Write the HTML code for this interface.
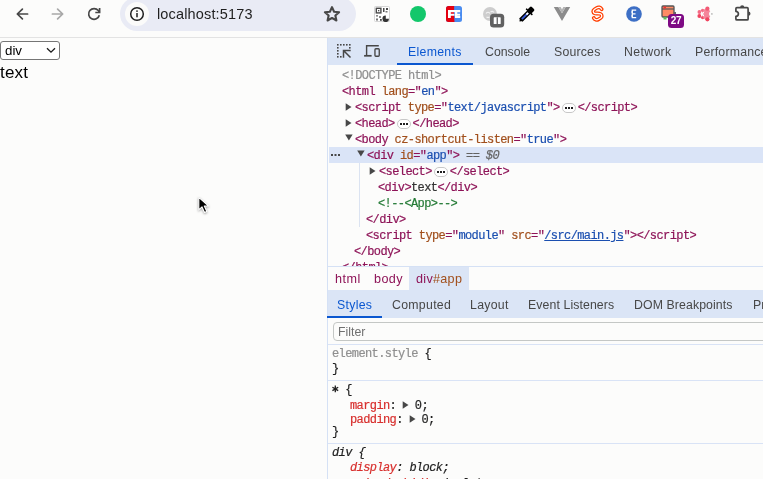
<!DOCTYPE html>
<html><head><meta charset="utf-8">
<style>
*{margin:0;padding:0;box-sizing:border-box}
html,body{width:763px;height:479px;overflow:hidden;background:#fcfcfb;font-family:"Liberation Sans",sans-serif;position:relative}
.a{position:absolute;white-space:pre}
#tb{position:absolute;left:0;top:0;width:763px;height:37px;background:#fcfcfb}
#tbline{position:absolute;left:0;top:37px;width:763px;height:1px;background:#e3e3e3}
#omni{position:absolute;left:120px;top:-3px;width:236px;height:34px;border-radius:17px;background:#e9ebf5}
#omnicirc{position:absolute;left:125px;top:2px;width:24px;height:24px;border-radius:12px;background:#fbfbfa}
#url{position:absolute;left:157px;top:5px;font-size:14.5px;color:#1f1f1f;line-height:18px;letter-spacing:0.15px}
/* devtools */
#dt{position:absolute;left:327px;top:38px;width:436px;height:441px;background:#fcfcfb}
#dtborder{position:absolute;left:327px;top:38px;width:1px;height:441px;background:#d5e1f5}
#tabs{position:absolute;left:328px;top:38px;width:435px;height:27px;background:#dbe5f6}
.tab{position:absolute;top:46px;font-size:12.3px;line-height:13px;color:#474747}
.mono{font-family:"Liberation Mono",monospace;font-size:12px;letter-spacing:-0.6px;line-height:16px;-webkit-text-stroke:0.2px}
.tag{color:#8e1458}
.an{color:#a14f1c}
.av{color:#1b4fb0}
.gr{color:#8f8f8f}
.cm{color:#237a35}
.row{position:absolute;height:16px}
#sel{position:absolute;left:329px;top:147px;width:434px;height:16px;background:#dae4f7}
#guide{position:absolute;left:359px;top:163px;width:1px;height:64px;background:#dbe3f1}
#bcline{position:absolute;left:328px;top:266px;width:435px;height:1px;background:#d5e1f5}
#bchl{position:absolute;left:409px;top:267px;width:60px;height:23px;background:#dbe5f6}
.bc{position:absolute;top:272px;font-size:12.6px;line-height:14px}
#stabs{position:absolute;left:328px;top:290px;width:435px;height:28px;background:#dbe5f6}
.st{position:absolute;top:299px;font-size:12.3px;line-height:13px;color:#474747}
#filter{position:absolute;left:333px;top:322px;width:440px;height:19px;border:1px solid #c4c7c5;border-radius:4px;background:#fcfcfb}
.sep{position:absolute;left:328px;width:435px;height:1px;background:#d9e3f6}
.pn{color:#d8302e}
.pill{display:inline-block;width:18px;height:16px;position:relative;vertical-align:top}
.pill svg{position:absolute;left:2.5px;top:3px}
</style></head><body><div id="root" style="position:absolute;left:0;top:0;width:763px;height:479px;overflow:hidden;will-change:transform">
<div id="tb"></div>
<div id="tbline"></div>
<div id="omni"></div>
<div id="omnicirc"></div>
<!-- info icon -->
<svg class="a" style="left:129px;top:6px" width="16" height="16" viewBox="0 0 16 16"><circle cx="8" cy="8" r="6.3" fill="none" stroke="#1f1f1f" stroke-width="1.5"/><rect x="7.25" y="7" width="1.5" height="4.3" fill="#1f1f1f"/><circle cx="8" cy="5.1" r="0.9" fill="#1f1f1f"/></svg>
<div id="url">localhost:5173</div>
<!-- back -->
<svg class="a" style="left:14px;top:6px" width="16" height="16" viewBox="0 0 16 16"><path d="M13.6 8H3.5M8.4 3.1L3.3 8 8.4 12.9" fill="none" stroke="#474747" stroke-width="1.7" stroke-linecap="round" stroke-linejoin="round"/></svg>
<svg class="a" style="left:50px;top:6px" width="16" height="16" viewBox="0 0 16 16"><path d="M2.4 8h10.1M7.6 3.1L12.7 8 7.6 12.9" fill="none" stroke="#a8a8a8" stroke-width="1.7" stroke-linecap="round" stroke-linejoin="round"/></svg>
<svg class="a" style="left:84px;top:4px" width="20" height="20" viewBox="0 0 20 20"><path d="M15.3 11.2A5.4 5.4 0 1 1 14.3 6.6L15.6 8.4" fill="none" stroke="#474747" stroke-width="1.7"/><path d="M15.6 3.9v4.6H11.3" fill="none" stroke="#474747" stroke-width="1.7"/></svg>
<!-- star -->
<svg class="a" style="left:323px;top:5px" width="18" height="17" viewBox="0 0 18 17"><path d="M9 2.1l2.1 4.6 5 .5-3.75 3.35 1.05 4.95L9 12.95l-4.4 2.55 1.05-4.95L1.9 7.2l5-.5z" fill="none" stroke="#474747" stroke-width="2.1" stroke-linejoin="round"/></svg>
<div class="a" style="left:0;top:41px;width:60px;height:19px;border:1px solid #767676;border-radius:3px;background:#fff"></div>
<div class="a" style="left:5px;top:43px;font-size:13.3px;line-height:15px;color:#000">div</div>
<svg class="a" style="left:46px;top:47px" width="10" height="7" viewBox="0 0 10 7"><path d="M1 1.2l4 4 4-4" fill="none" stroke="#1a1a1a" stroke-width="1.3"/></svg>
<div class="a" style="left:0;top:63.5px;font-size:17px;line-height:18px;letter-spacing:0.2px;color:#000">text</div>

<div id="dt"></div>
<div id="dtborder"></div>
<div id="tabs"></div>
<div class="a" style="left:397px;top:63px;width:76px;height:2px;background:#0b57d0"></div>
<div class="tab" style="left:408px;color:#0b57d0;letter-spacing:0.3px">Elements</div>
<div class="tab" style="left:485px">Console</div>
<div class="tab" style="left:554px;letter-spacing:0.2px">Sources</div>
<div class="tab" style="left:624px;letter-spacing:0.35px">Network</div>
<div class="tab" style="left:695px;letter-spacing:0.2px">Performance</div>

<div id="sel"></div>
<div id="guide"></div>
<div class="a mono gr" style="left:342px;top:68px">&lt;!DOCTYPE html&gt;</div>
<div class="a mono" style="left:342px;top:84px"><span class="tag">&lt;html </span><span class="an">lang</span><span class="tag">="</span><span class="av">en</span><span class="tag">"&gt;</span></div>
<div class="a mono" style="left:355px;top:100px"><span class="tag">&lt;script </span><span class="an">type</span><span class="tag">="</span><span class="av">text/javascript</span><span class="tag">"&gt;</span><span class="pill"><svg width="14" height="10" viewBox="0 0 14 10"><rect x="0.5" y="0.5" width="13" height="9" rx="4.5" fill="#fff" stroke="#c7c7c7"/><g fill="#1f1f1f"><rect x="3" y="4" width="2" height="2"/><rect x="6" y="4" width="2" height="2"/><rect x="9" y="4" width="2" height="2"/></g></svg></span><span class="tag">&lt;/script&gt;</span></div>
<div class="a mono" style="left:355px;top:116px"><span class="tag">&lt;head&gt;</span><span class="pill"><svg width="14" height="10" viewBox="0 0 14 10"><rect x="0.5" y="0.5" width="13" height="9" rx="4.5" fill="#fff" stroke="#c7c7c7"/><g fill="#1f1f1f"><rect x="3" y="4" width="2" height="2"/><rect x="6" y="4" width="2" height="2"/><rect x="9" y="4" width="2" height="2"/></g></svg></span><span class="tag">&lt;/head&gt;</span></div>
<div class="a mono" style="left:355px;top:132px"><span class="tag">&lt;body </span><span class="an">cz-shortcut-listen</span><span class="tag">="</span><span class="av">true</span><span class="tag">"&gt;</span></div>
<div class="a mono" style="left:367px;top:148px"><span class="tag">&lt;div </span><span class="an">id</span><span class="tag">="</span><span class="av">app</span><span class="tag">"&gt;</span> <span style="color:#636363">== <i>$0</i></span></div>
<div class="a mono" style="left:379px;top:164px"><span class="tag">&lt;select&gt;</span><span class="pill"><svg width="14" height="10" viewBox="0 0 14 10"><rect x="0.5" y="0.5" width="13" height="9" rx="4.5" fill="#fff" stroke="#c7c7c7"/><g fill="#1f1f1f"><rect x="3" y="4" width="2" height="2"/><rect x="6" y="4" width="2" height="2"/><rect x="9" y="4" width="2" height="2"/></g></svg></span><span class="tag">&lt;/select&gt;</span></div>
<div class="a mono" style="left:378px;top:180px"><span class="tag">&lt;div&gt;</span><span style="color:#333">text</span><span class="tag">&lt;/div&gt;</span></div>
<div class="a mono cm" style="left:378px;top:196px">&lt;!--&lt;App&gt;--&gt;</div>
<div class="a mono tag" style="left:366px;top:212px">&lt;/div&gt;</div>
<div class="a mono" style="left:366px;top:228px"><span class="tag">&lt;script </span><span class="an">type</span><span class="tag">="</span><span class="av">module</span><span class="tag">" </span><span class="an">src</span><span class="tag">="</span><span class="av" style="text-decoration:underline">/src/main.js</span><span class="tag">"&gt;&lt;/script&gt;</span></div>
<div class="a mono tag" style="left:354px;top:244px">&lt;/body&gt;</div>
<div class="a mono tag" style="left:342px;top:260px">&lt;/html&gt;</div>

<div id="bcline"></div>
<div class="a" style="left:328px;top:267px;width:435px;height:23px;background:#fcfcfb"></div>
<div id="bchl"></div>
<div class="bc tag" style="left:335px;letter-spacing:0.5px">html</div>
<div class="bc tag" style="left:374px;letter-spacing:0.4px">body</div>
<div class="bc" style="left:416px;letter-spacing:0.3px"><span class="tag">div</span><span class="an">#app</span></div>

<div id="stabs"></div>
<div class="a" style="left:327px;top:316px;width:55px;height:2px;background:#0b57d0"></div>
<div class="st" style="left:337px;color:#0b57d0;letter-spacing:0.3px">Styles</div>
<div class="st" style="left:392px;letter-spacing:0.3px">Computed</div>
<div class="st" style="left:470px;letter-spacing:0.3px">Layout</div>
<div class="st" style="left:528px;letter-spacing:0.1px">Event Listeners</div>
<div class="st" style="left:634px;letter-spacing:0.1px">DOM Breakpoints</div>
<div class="st" style="left:753px">Pr</div>

<div id="filter"></div>
<div class="a" style="left:338px;top:325px;font-size:12.3px;line-height:14px;color:#707070">Filter</div>
<div class="sep" style="top:344px"></div>
<div class="a mono" style="left:332px;top:346px"><span class="gr">element.style</span> <span style="color:#1f1f1f">{</span></div>
<div class="a mono" style="left:332px;top:361px;color:#1f1f1f">}</div>
<div class="sep" style="top:380px"></div>
<div class="a mono" style="left:332px;top:382px;color:#1f1f1f"><span style="display:inline-block;width:13.2px"></span>{</div>
<div class="a mono" style="left:350px;top:398px"><span class="pn">margin</span><span style="color:#1f1f1f">: </span><span style="display:inline-block;width:12px"></span><span style="color:#1f1f1f">0;</span></div>
<div class="a mono" style="left:350px;top:412px"><span class="pn">padding</span><span style="color:#1f1f1f">: </span><span style="display:inline-block;width:12px"></span><span style="color:#1f1f1f">0;</span></div>
<div class="a mono" style="left:332px;top:424px;color:#1f1f1f">}</div>
<div class="sep" style="top:443px"></div>
<div class="a mono" style="left:332px;top:445px;color:#1f1f1f;font-style:italic">div {</div>
<div class="a mono" style="left:350px;top:460px;font-style:italic"><span class="pn">display</span><span style="color:#1f1f1f">: block;</span></div>
<div class="a mono" style="left:350px;top:476px;font-style:italic"><span class="pn">unicode-bidi</span><span style="color:#1f1f1f">: isolate;</span></div>

<!-- devtools icons -->
<svg class="a" style="left:336px;top:43px" width="16" height="16" viewBox="0 0 16 16"><g fill="#474747"><rect x="1" y="1" width="1.6" height="1.6"/><rect x="4" y="1" width="1.6" height="1.6"/><rect x="7" y="1" width="1.6" height="1.6"/><rect x="10" y="1" width="1.6" height="1.6"/><rect x="13" y="1" width="1.6" height="1.6"/><rect x="1" y="4" width="1.6" height="1.6"/><rect x="13" y="4" width="1.6" height="1.6"/><rect x="1" y="7" width="1.6" height="1.6"/><rect x="1" y="10" width="1.6" height="1.6"/><rect x="1" y="13" width="1.6" height="1.6"/><rect x="4" y="13" width="1.6" height="1.6"/></g><path d="M7.5 14.7V7.5h7.2M8 8l6.5 6.5" fill="none" stroke="#474747" stroke-width="1.5"/></svg>
<svg class="a" style="left:363px;top:44px" width="18" height="15" viewBox="0 0 18 15"><path d="M3.6 11.5V1.7h12.2" fill="none" stroke="#474747" stroke-width="1.4"/><rect x="1.1" y="10.95" width="7.5" height="1.7" fill="#474747"/><rect x="11.95" y="4.75" width="4.3" height="7.5" rx="0.9" fill="none" stroke="#474747" stroke-width="1.35"/></svg>
<!-- tree triangles -->
<svg class="a" style="left:345px;top:103px" width="7" height="8" viewBox="0 0 7 8"><path d="M0.7 0.3L6.5 4 0.7 7.7z" fill="#474747"/></svg>
<svg class="a" style="left:345px;top:119px" width="7" height="8" viewBox="0 0 7 8"><path d="M0.7 0.3L6.5 4 0.7 7.7z" fill="#474747"/></svg>
<svg class="a" style="left:345px;top:134px" width="8" height="7" viewBox="0 0 8 7"><path d="M0.2 0.6h7.4L3.9 6.6z" fill="#474747"/></svg>
<svg class="a" style="left:357px;top:150px" width="8" height="7" viewBox="0 0 8 7"><path d="M0.2 0.6h7.4L3.9 6.6z" fill="#474747"/></svg>
<svg class="a" style="left:369px;top:167px" width="7" height="8" viewBox="0 0 7 8"><path d="M0.7 0.3L6.5 4 0.7 7.7z" fill="#474747"/></svg>
<!-- selected dots -->
<svg class="a" style="left:330px;top:152px" width="12" height="6" viewBox="0 0 12 6"><g fill="#474747"><rect x="1" y="2" width="2" height="2"/><rect x="4.5" y="2" width="2" height="2"/><rect x="8" y="2" width="2" height="2"/></g></svg>
<!-- style triangles -->
<svg class="a" style="left:402px;top:401px" width="7" height="8" viewBox="0 0 7 8"><path d="M0.7 0.3L6.5 4 0.7 7.7z" fill="#474747"/></svg>
<svg class="a" style="left:409px;top:415px" width="7" height="8" viewBox="0 0 7 8"><path d="M0.7 0.3L6.5 4 0.7 7.7z" fill="#474747"/></svg>

<!-- extension icons -->
<svg class="a" style="left:374px;top:6px" width="16" height="16" viewBox="0 0 16 16"><rect x="0.5" y="0.5" width="15" height="15" rx="1" fill="#fff" stroke="#d5d5d5"/><rect x="2.3" y="2.3" width="4.6" height="4.6" fill="none" stroke="#4a4a4a" stroke-width="1.4"/><rect x="4" y="4" width="1.3" height="1.3" fill="#4a4a4a"/><rect x="9" y="2" width="1.5" height="4" fill="#4a4a4a"/><rect x="12" y="2" width="2" height="2" fill="#4a4a4a"/><rect x="11.5" y="5" width="2" height="1.5" fill="#777"/><rect x="2" y="9" width="2" height="1.6" fill="#888"/><rect x="5" y="10" width="2" height="2" fill="#888"/><rect x="2" y="12.5" width="2" height="2" fill="#777"/><rect x="6" y="13" width="1.8" height="1.8" fill="#4a4a4a"/><path d="M11.8 9.5A3.3 3.3 0 1 0 15 12.8h-3.2z" fill="#333"/></svg>
<svg class="a" style="left:410px;top:6px" width="16" height="16" viewBox="0 0 16 16"><circle cx="8" cy="8" r="8" fill="#13c76b"/></svg>
<svg class="a" style="left:446px;top:6px" width="16" height="16" viewBox="0 0 16 16"><rect width="16" height="16" rx="2.5" fill="#4a8cf0"/><path d="M2.5 0H8.2Q7.6 8 8.5 16H2.5A2.5 2.5 0 0 1 0 13.5V2.5A2.5 2.5 0 0 1 2.5 0z" fill="#e40010"/><path d="M2 4h7v2.3H4.8v1.5H8.5v2H4.8V12H2z" fill="#fff"/><path d="M9 4h5.2v2.2H11.3v1.5h2.7v2h-2.7V10h2.9v2.1H9z" fill="#fff"/></svg>
<svg class="a" style="left:482px;top:6px" width="24" height="23" viewBox="0 0 24 23"><circle cx="8" cy="8" r="7" fill="#cdcdcd"/><path d="M4 7.5q2-2.5 4 0M8.5 6q2-1.5 3.5 0.5M4.5 11q1.5 1 3 0" fill="none" stroke="#f2f2f2" stroke-width="1.2"/><rect x="8" y="7.8" width="14.2" height="13.8" rx="3.5" fill="#616161"/><rect x="11.7" y="11.3" width="7" height="6.8" rx="0.6" fill="#fff"/><rect x="14.6" y="11.3" width="1.3" height="6.8" fill="#616161"/></svg>
<svg class="a" style="left:516px;top:5px" width="20" height="20" viewBox="0 0 20 20"><g transform="rotate(45 10 10) translate(10 10) scale(0.96)"><rect x="-2.9" y="-10.2" width="5.8" height="5.4" rx="1.4" fill="#000"/><rect x="-4.6" y="-5.6" width="9.2" height="1.7" rx="0.5" fill="#000"/><rect x="-1.7" y="-3.6" width="3.4" height="10.4" fill="#3a5bd9" stroke="#000" stroke-width="1.5"/><rect x="-1" y="-3.2" width="2" height="2.6" fill="#fff"/><path d="M-2.4 6.6H2.4L0 9.6Z" fill="#000"/></g></svg>
<svg class="a" style="left:553px;top:6px" width="18" height="16" viewBox="0 0 18 16"><path d="M0.8 1h4.5L9 7.2 12.7 1h4.5L9 15z" fill="#8c8c8c"/><path d="M5.3 1h2.4L9 3.4 10.3 1h2.4L9 7.2z" fill="#b3b3b3"/></svg>
<svg class="a" style="left:590px;top:5px" width="16" height="17" viewBox="0 0 16 17"><path d="M11.6 4.2C10.6 2.3 8.4 1.9 6.6 3L4.3 4.5C2.8 5.5 2.9 7.6 4.6 8.3 6 8.9 8.5 8 10.4 8.9 12.3 9.8 12.1 12 10.6 13L8.5 14.3C6.8 15.4 4.6 14.8 3.8 13" fill="none" stroke="#ff3e00" stroke-width="3.8" stroke-linecap="round"/><path d="M11.6 4.2C10.6 2.3 8.4 1.9 6.6 3L4.3 4.5C2.8 5.5 2.9 7.6 4.6 8.3 6 8.9 8.5 8 10.4 8.9 12.3 9.8 12.1 12 10.6 13L8.5 14.3C6.8 15.4 4.6 14.8 3.8 13" fill="none" stroke="#fff" stroke-width="1.3" stroke-linecap="round"/></svg>
<svg class="a" style="left:626px;top:6px" width="16" height="16" viewBox="0 0 16 16"><circle cx="8" cy="8" r="7.8" fill="#3d6fc5"/><path d="M10.2 4.2H6.3v3.6h3.2M6.3 7.8v3.8h3.9" fill="none" stroke="#fff" stroke-width="1.3"/><path d="M5 6h1.3M5 10h1.3" stroke="#fff" stroke-width="0.9"/></svg>
<svg class="a" style="left:661px;top:5px" width="16" height="15" viewBox="0 0 16 15"><rect x="1" y="1" width="12" height="11" rx="1" fill="#ff8a65" stroke="#555" stroke-width="1.3"/><path d="M1 4h12" stroke="#555" stroke-width="1.2"/><rect x="2.5" y="1.5" width="2.5" height="2" fill="#e33"/><rect x="12.8" y="7" width="2.2" height="3.5" fill="#666"/><rect x="2.5" y="12" width="3" height="2.5" fill="#5cb85c"/></svg>
<div class="a" style="left:668px;top:14px;width:16px;height:14px;border-radius:3.5px;background:#7e0a84;color:#fff;font-weight:bold;font-size:10px;line-height:14px;text-align:center;letter-spacing:-0.2px">27</div>
<svg class="a" style="left:694px;top:3px" width="22" height="21" viewBox="0 0 22 21"><circle cx="5.4" cy="9" r="1.9" fill="#f46a84"/><circle cx="5.4" cy="12.9" r="2" fill="#f0445f"/><circle cx="8.6" cy="7.4" r="1.7" fill="#f46a84"/><circle cx="8.6" cy="14.6" r="1.7" fill="#f0506a"/><ellipse cx="12.4" cy="11" rx="4.2" ry="5.4" fill="#f5869b"/><circle cx="13.4" cy="5.7" r="2.1" fill="#f25a75"/><circle cx="13.4" cy="16.3" r="2.1" fill="#f0445f"/><path d="M7.3 8.8l2.6 4.4M9.9 8.8l-2.6 4.4" stroke="#fff" stroke-width="1"/><circle cx="17.3" cy="11" r="2.4" fill="#fcfcfb"/><circle cx="17.9" cy="10.9" r="0.7" fill="#888"/></svg>
<svg class="a" style="left:733px;top:4px" width="20" height="18" viewBox="0 0 20 18"><path d="M7.1 3.3A2.1 2.1 0 0 1 11.3 3.3Z" fill="#474747"/><path d="M15.4 7.6A2.1 2.1 0 0 1 15.4 11.8Z" fill="#474747"/><path d="M3.9 3.65H14.1Q15.1 3.65 15.1 4.65V14.95Q15.1 15.95 14.1 15.95H3.9Q2.9 15.95 2.9 14.95V12.3A2.5 2.5 0 0 0 2.9 7.3V4.65Q2.9 3.65 3.9 3.65Z" fill="none" stroke="#474747" stroke-width="1.7" stroke-linejoin="round"/></svg>
<svg class="a" style="left:331px;top:385px" width="9" height="8" viewBox="0 0 9 8"><path d="M4.3 0.6V7.2M1.4 2.2L7.2 5.6M1.4 5.6L7.2 2.2" stroke="#1f1f1f" stroke-width="1.3"/></svg>
<!-- cursor -->
<svg class="a" style="left:196px;top:195px;filter:drop-shadow(0.8px 1.2px 1px rgba(0,0,0,0.35))" width="18" height="22" viewBox="0 0 18 22"><path d="M2.8 2.3V14.9L6 11.9 8.5 17.4 10.8 16.4 8.3 11H12.6Z" fill="#000" stroke="#fff" stroke-width="1.1" stroke-linejoin="round"/></svg>
</div></body></html>
